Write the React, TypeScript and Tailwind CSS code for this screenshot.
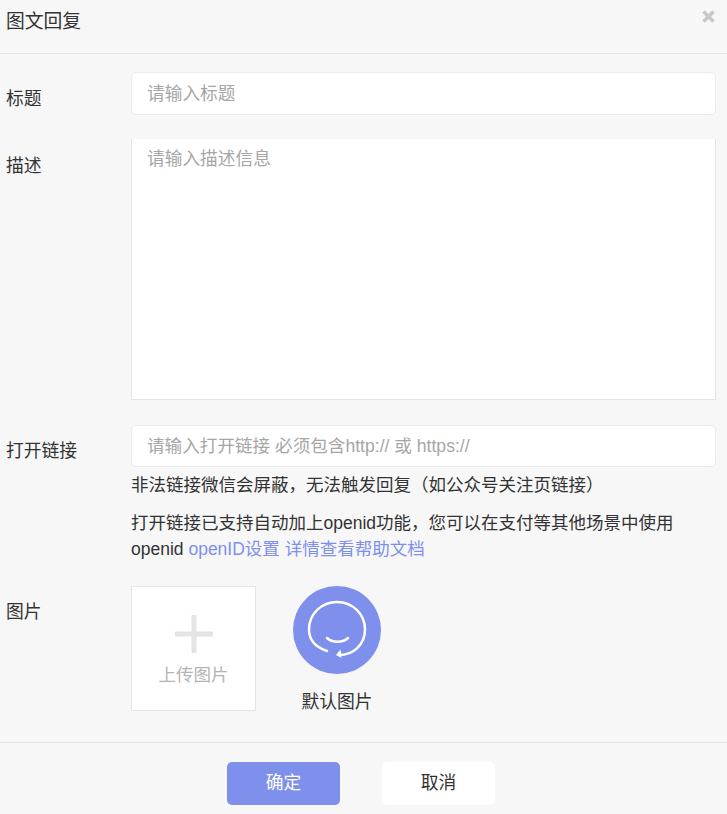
const App = () => {
  return (
    <div className="h-[814px] w-[727px] overflow-hidden bg-[#f7f7f8] text-[#333] [font-family:'Liberation_Sans','Noto_Sans_CJK_SC',sans-serif]">
      <header className="flex h-[54px] justify-between border-b border-[#e4e4e6] pl-[6px] pr-[11px]">
        <h1 className="pt-[8px] text-[18.8px] leading-[28px] font-normal">图文回复</h1>
        <span className="pt-[9px] text-[#c8c8c8]">
          <svg width="15" height="15" viewBox="0 0 15 15">
            <path d="M2.500 2.500l10 10M12.500 2.500l-10 10" stroke="currentColor" strokeWidth="3.500" fill="none" />
          </svg>
        </span>
      </header>

      <form className="flex flex-col pl-[6px] pr-[11px]">
        <div className="mt-[18px] flex">
          <label className="w-[125px] pt-[14px] text-[17.8px] leading-[26px]">标题</label>
          <div className="flex h-[43px] flex-1 items-center rounded-[5px] border border-[#ebebed] bg-white pl-[15px] pt-[1px] text-[17.7px] text-[#a6a6a6]">
            请输入标题
          </div>
        </div>

        <div className="mt-[24px] flex">
          <label className="w-[125px] pt-[14px] text-[17.8px] leading-[26px]">描述</label>
          <div className="h-[261px] flex-1 border-x border-b border-[#e4e4e6] bg-white pl-[15px] pt-[7px] text-[17.7px] leading-[26px] text-[#a6a6a6]">
            请输入描述信息
          </div>
        </div>

        <div className="mt-[25px] flex">
          <label className="w-[125px] pt-[13px] text-[17.8px] leading-[26px]">打开链接</label>
          <div className="flex-1">
            <div className="flex h-[42px] items-center rounded-[5px] border border-[#ebebed] bg-white pl-[15px] text-[17.600px] text-[#a6a6a6]">
              请输入打开链接 必须包含http:// 或 https://
            </div>
            <p className="mt-[5px] text-[17.5px] leading-[26px]">
              非法链接微信会屏蔽，无法触发回复（如公众号关注页链接）
            </p>
            <p className="mt-[12px] text-[17.5px] leading-[26px]">
              打开链接已支持自动加上openid功能，您可以在支付等其他场景中使用
              <br />
              openid <a className="text-[#7e8fec]">openID设置</a>{" "}
              <a className="text-[#7e8fec]">详情查看帮助文档</a>
            </p>
          </div>
        </div>

        <div className="mt-[24px] flex">
          <label className="w-[125px] pt-[13px] text-[17.8px] leading-[26px]">图片</label>
          <div className="flex">
            <div className="flex h-[125px] w-[125px] flex-col items-center border border-[#e4e4e6] bg-white">
              <svg width="40" height="40" viewBox="0 0 40 40" className="mt-[27px] text-[#e4e4e6]">
                <path d="M17.500 1h5v16.500h16.500v5H22.500v16.500h-5V22.500H1v-5h16.500z" fill="currentColor" />
              </svg>
              <span className="mt-[9px] text-[17.5px] leading-[24px] text-[#b4b4b4]">上传图片</span>
            </div>
            <div className="ml-[37px] flex flex-col items-center">
              <svg width="88" height="88" viewBox="0 0 88 88">
                <circle cx="44" cy="44" r="44" fill="#7e8fec" />
                <path
                  d="M34 65C22 61 16 53 16 43.500C16 28 28.500 16 44 16C59.500 16 72 28 72 43.500C72 59 60 69 46 69"
                  fill="none"
                  stroke="#fff"
                  strokeWidth="2.500"
                  strokeLinecap="round"
                />
                <path d="M43 69L47.500 63.500L48.500 72z" fill="#fff" />
                <path
                  d="M34 52C39 57 50 57 55 52"
                  fill="none"
                  stroke="#fff"
                  strokeWidth="2.500"
                  strokeLinecap="round"
                />
              </svg>
              <span className="mt-[15px] text-[17.8px] leading-[26px]">默认图片</span>
            </div>
          </div>
        </div>
      </form>

      <footer className="mt-[27px] flex justify-center gap-[42px] border-t border-[#e4e4e6] pr-[5px] pt-[19px]">
        <button className="h-[43px] w-[113px] rounded-[5px] bg-[#7e8fec] text-[17.8px] text-white">确定</button>
        <button className="h-[43px] w-[113px] rounded-[5px] bg-white text-[17.8px] text-[#333]">取消</button>
      </footer>
    </div>
  );
};

export default App;
